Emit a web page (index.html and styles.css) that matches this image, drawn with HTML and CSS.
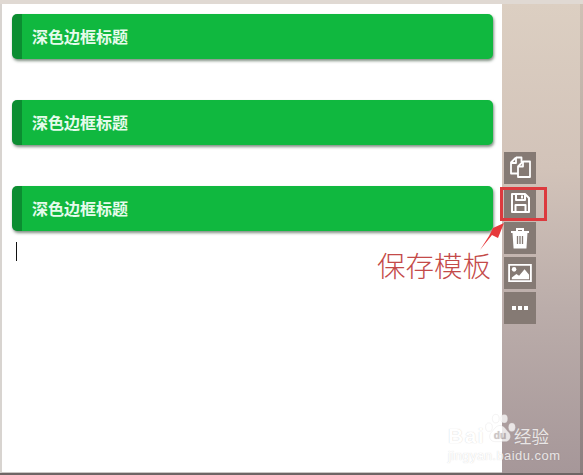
FILE: index.html
```html
<!DOCTYPE html>
<html lang="zh-CN">
<head>
<meta charset="utf-8">
<title>保存模板</title>
<link rel="stylesheet" href="styles.css">
</head>
<body>
<div class="window">
  <main class="editor">
    <h2 class="title">深色边框标题</h2>
    <h2 class="title">深色边框标题</h2>
    <h2 class="title">深色边框标题</h2>
    <div class="caret"></div>
  </main>
  <aside class="side">
    <div class="tools">
      <button class="tool"><svg viewBox="0 0 24 24" width="24" height="24" fill="none" stroke="#fff" stroke-width="1.800" stroke-linejoin="round"><path d="M8 1.500 3 6.500v11h7"/><path d="M8 1.500h5.500V6"/><path d="M3 7h5V2"/><path d="M15 5.500h7V21H10V10.500z"/><path d="M15 6v4.500h-5"/></svg></button>
      <button class="tool"><svg viewBox="0 0 24 24" width="24" height="24" fill="none" stroke="#fff" stroke-width="2" stroke-linejoin="round"><path d="M4 3h13l4 4v14H4z"/><path d="M8 3v6h9V3"/><path d="M14 4.500v3"/><path d="M7.500 21v-7h10v7"/></svg></button>
      <button class="tool"><svg viewBox="0 0 24 24" width="24" height="24" fill="none" stroke="#fff" stroke-width="2"><path d="M3 6h18"/><path d="M9 6V3h6v3"/><path d="M5.500 6.500 6.500 21.500h11l1-15" fill="#fff"/><path d="M9.500 10v8M12 10v8M14.500 10v8" stroke="#857a74" stroke-width="1.300"/></svg></button>
      <button class="tool"><svg viewBox="0 0 26 22" width="24" height="20"><path d="M1 2h24v18H1z" fill="none" stroke="#fff" stroke-width="2"/><circle cx="6.500" cy="7" r="2.500" fill="#fff"/><path d="M4 18v-2l5-4 3 2 6-7 5 6v5z" fill="#fff"/></svg></button>
      <button class="tool"><span class="dots"><i></i><i></i><i></i></span></button>
    </div>
  </aside>
  <div class="highlight"></div>
  <svg class="arrow" viewBox="0 0 30 40" width="30" height="40"><path d="M2 29 11 15 15 7 26 2 20 17 14 14z" fill="#e6393c"/></svg>
  <div class="note">保存模板</div>
  <div class="mark">
    <div class="mark-top">
      <span class="mark-bai">Bai</span>
      <svg class="paw" viewBox="0 0 40 40" width="34" height="34"><g fill="#fff" stroke="#c9c3c3" stroke-opacity=".5" stroke-width=".6"><ellipse cx="7" cy="19" rx="4" ry="5"/><ellipse cx="15" cy="9" rx="4" ry="5"/><ellipse cx="25" cy="9" rx="4" ry="5"/><ellipse cx="34" cy="19" rx="4" ry="5"/><path d="M20 17c5 0 7 5 11 9 3 5 0 10-5 10H14c-5 0-8-5-5-10 4-4 6-9 11-9z"/></g><text x="20" y="33" class="paw-du">du</text></svg>
      <span class="mark-cn">经验</span>
    </div>
    <div class="mark-url">jingyan.baidu.com</div>
  </div>
</div>
</body>
</html>
```

FILE: styles.css
```css
* { box-sizing: border-box; }
html, body { margin: 0; padding: 0; }
body {
  width: 583px;
  height: 475px;
  overflow: hidden;
  background: #b9aca8;
}
.window {
  position: relative;
  width: 583px;
  height: 475px;
  padding-right: 3px;
  border-top: 4px solid #e0d9d3;
  border-bottom: 2px solid #6e6565;
  display: flex;
  background: linear-gradient(#cfc1b5, #8c7f80);
}
.editor {
  width: 502px;
  background: #fff;
  border-left: 2px solid #d8d4d0;
  border-bottom: 1px solid #c9c6c4;
  padding: 10px 9px 0 10px;
  display: flex;
  flex-direction: column;
  gap: 41px;
}
.title {
  margin: 0;
  height: 45px;
  padding: 0 0 1px 10px;
  background: #10b83f;
  border-left: 10px solid #0b8d31;
  border-radius: 5px;
  box-shadow: 1px 2px 3px rgba(60, 85, 65, .65);
  color: #e6fbec;
  font: bold 16px/44px "Noto Sans CJK SC", sans-serif;
}
.caret {
  width: 1px;
  height: 19px;
  margin: -30px 0 0 4px;
  background: #111;
}
.side {
  flex: 1;
  background: linear-gradient(#dccfc2, #d2c3b9 35%, #bbadaa 65%, #a69799 100%);
  padding: 148px 0 0 2px;
}
.tools {
  display: flex;
  flex-direction: column;
  gap: 3px;
  width: 32px;
}
.tool {
  width: 32px;
  height: 32px;
  padding: 0;
  border: 0;
  background: #857a74;
  display: flex;
  align-items: center;
  justify-content: center;
}
.dots { display: flex; gap: 2px; }
.dots i { width: 4px; height: 4px; background: #fff; display: block; }
.highlight {
  position: absolute;
  left: 500px;
  top: 183px;
  width: 47px;
  height: 34px;
  border: 3px solid #dc3a3e;
}
.arrow {
  position: absolute;
  left: 478px;
  top: 217px;
}
.note {
  position: absolute;
  left: 377px;
  top: 241px;
  font: 300 28.500px/40px "Noto Sans CJK SC", sans-serif;
  color: #c44a49;
  white-space: nowrap;
}
.mark {
  position: absolute;
  left: 448px;
  top: 409px;
  width: 125px;
  color: #fff;
  opacity: .75;
  text-shadow: 0 0 1px rgba(120, 110, 110, .45);
  font-family: "Liberation Sans", sans-serif;
}
.mark-top { display: flex; align-items: flex-end; height: 32px; }
.mark-bai { font: bold 21px/18px "Liberation Sans", sans-serif; width: 36px; letter-spacing: 1.500px; }
.paw { flex: none; margin: 0 0 0 -1px; }
.paw-du { font: bold 12px "Liberation Sans", sans-serif; fill: #bdb3b3; text-anchor: middle; }
.mark-cn { font: 17.500px/18px "Noto Sans CJK SC", sans-serif; margin-left: -3px; white-space: nowrap; }
.mark-url { font: 13px/14px "Liberation Sans", sans-serif; margin: 4px 0 0 0; letter-spacing: .45px; white-space: nowrap; }
```
